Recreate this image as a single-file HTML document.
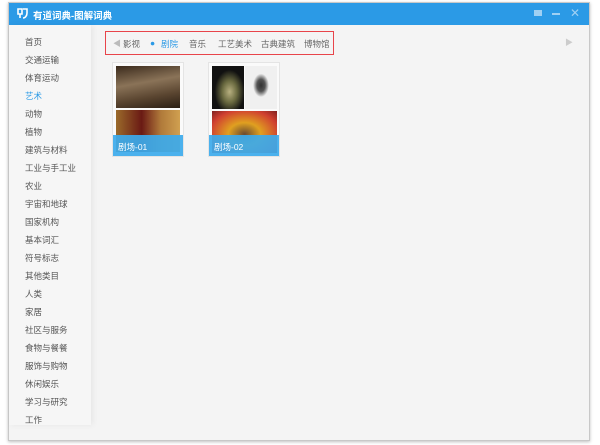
<!DOCTYPE html>
<html><head><meta charset="utf-8"><style>
*{margin:0;padding:0;box-sizing:border-box}
body{width:600px;height:445px;background:#fff;position:relative;overflow:hidden;font-family:"Liberation Sans","Noto Sans CJK SC",sans-serif}
.win{position:absolute;left:8px;top:2px;width:582px;height:439px;background:#f4f4f4;border:1px solid #c8c8c8;box-shadow:0 1px 3px rgba(0,0,0,.25)}
.hd{position:absolute;left:0;top:0;width:580px;height:22px;background:#2b9ae6;color:#fff;font-size:9.5px;font-weight:bold}
.hd .t{position:absolute;left:24px;top:5px}
.side{position:absolute;left:0;top:22px;width:82px;height:400px;background:#f6f6f6;box-shadow:2px 0 6px rgba(0,0,0,.06)}
.side div{position:absolute;left:16px;font-size:8.5px;color:#555;line-height:10px}
.red{position:absolute;left:96px;top:28px;width:229px;height:24px;border:1.5px solid #e8444a}
.red span{position:absolute;top:6px;font-size:8.5px;color:#666}
.card{position:absolute;top:59px;width:72px;height:95px;background:#fafafa;border:1px solid #e4e4e4}
.lbl{position:absolute;left:0;bottom:0;width:70px;height:21px;background:rgba(60,170,235,.92);color:#fff;font-size:8.5px;padding:6px 0 0 5px}
.im{position:absolute}
</style></head><body>
<div class="win">
<div class="hd">
<svg style="position:absolute;left:7px;top:4px" width="13" height="13" viewBox="0 0 13 13"><path d="M2 2h4v5H2zM7 2h4v4c0 3-2 5-4 5M4 7v4" stroke="#fff" stroke-width="1.6" fill="none"/></svg>
<span class="t">有道词典-图解词典</span>
<div style="position:absolute;left:525px;top:7px;width:8px;height:6px;background:#9fd0f3"></div>
<div style="position:absolute;left:543px;top:10px;width:8px;height:1.5px;background:#9fd0f3"></div>
<div style="position:absolute;left:561px;top:3px;color:#9fd0f3;font-size:12px;font-weight:normal">✕</div>
</div>
<div class="side">
<div style="top:12px">首页</div><div style="top:30px">交通运输</div><div style="top:48px">体育运动</div>
<div style="top:66px;color:#2b9ae6">艺术</div><div style="top:84px">动物</div><div style="top:102px">植物</div>
<div style="top:120px">建筑与材料</div><div style="top:138px">工业与手工业</div><div style="top:156px">农业</div>
<div style="top:174px">宇宙和地球</div><div style="top:192px">国家机构</div><div style="top:210px">基本词汇</div>
<div style="top:228px">符号标志</div><div style="top:246px">其他类目</div><div style="top:264px">人类</div>
<div style="top:282px">家居</div><div style="top:300px">社区与服务</div><div style="top:318px">食物与餐餐</div>
<div style="top:336px">服饰与购物</div><div style="top:354px">休闲娱乐</div><div style="top:372px">学习与研究</div>
<div style="top:390px">工作</div>
</div>
<div class="red">
<span style="left:7px;color:#bbb;font-size:8px">◀</span>
<span style="left:17px">影视</span>
<span style="left:44px;color:#2b9ae6">●</span>
<span style="left:55px;color:#2b9ae6">剧院</span>
<span style="left:83px">音乐</span>
<span style="left:112px">工艺美术</span>
<span style="left:155px">古典建筑</span>
<span style="left:198px">博物馆</span>
</div>
<div style="position:absolute;left:556px;top:34px;color:#ccc;font-size:8px">▶</div>
<div class="card" style="left:103px">
<div class="im" style="left:3px;top:3px;width:64px;height:42px;background:linear-gradient(170deg,#3a2a1c,#8a7358 40%,#5a4530 70%,#2a1e14)"></div>
<div class="im" style="left:3px;top:47px;width:64px;height:42px;background:linear-gradient(90deg,#9a6a2a,#6a1a14 40%,#b07a3a 70%,#d0a050)"></div>
<div class="lbl">剧场-01</div>
</div>
<div class="card" style="left:199px">
<div class="im" style="left:3px;top:3px;width:32px;height:43px;background:radial-gradient(ellipse at 55% 60%,#b8b080 0,#6a6a40 30%,#111 60%)"></div>
<div class="im" style="left:36px;top:3px;width:32px;height:43px;background:radial-gradient(ellipse at 50% 45%,#333 0,#555 18%,#f0f0f0 35%)"></div>
<div class="im" style="left:3px;top:48px;width:65px;height:42px;background:radial-gradient(ellipse at 50% 55%,#6a4a30 0,#e0a020 35%,#d04030 75%,#802020)"></div>
<div class="lbl">剧场-02</div>
</div>
</div>
</body></html>
